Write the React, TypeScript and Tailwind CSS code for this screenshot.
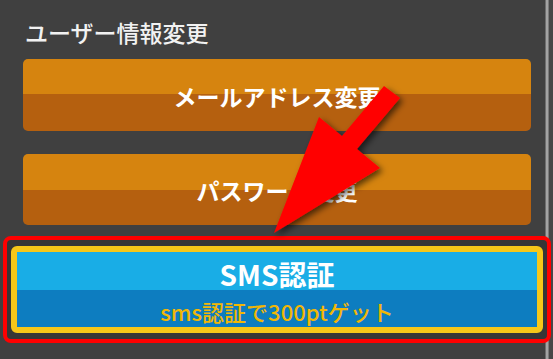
import React from "react";

export default function App() {
  return (
    <div className="relative flex h-[359px] w-[553px] overflow-hidden bg-[#404040] font-['Noto_Sans_CJK_JP','Noto_Sans',sans-serif]">
      <div className="flex w-[545px] flex-col">
        <div className="ml-[25px] mt-[17px] text-[23px] font-medium leading-[30px] text-[#f2f2f2]">
          ユーザー情報変更
        </div>
        <button className="ml-[23px] mr-[14px] mt-[12px] flex h-[72px] items-center justify-center rounded-[5px] bg-[linear-gradient(#d6840f_0_49%,#b5600f_49%)] pt-[2px] text-[23px] font-bold text-white">
          メールアドレス変更
        </button>
        <button className="ml-[23px] mr-[14px] mt-[23px] flex h-[71px] items-center justify-center rounded-[5px] bg-[linear-gradient(#d6840f_0_51%,#b5600f_51%)] pt-[2px] text-[23px] font-bold text-white">
          パスワード変更
        </button>
        <div className="relative z-10 ml-[3px] mr-[-6px] mt-[11px] rounded-[8px] border-[4px] border-[#ff0000] bg-[#363636] px-[4px] py-[6px]">
          <div className="flex h-[87px] flex-col overflow-hidden rounded-[6px] border-[6px] border-[#f6c719] bg-[#0d7dc0]">
            <div className="flex h-[38px] items-center justify-center bg-[#19ade6] pt-[6px] text-[28px] font-bold leading-none text-white">
              SMS認証
            </div>
            <div className="flex flex-1 items-center justify-center pt-[4px] text-[22px] font-medium leading-none text-[#f2b705]">
              sms認証で300ptゲット
            </div>
          </div>
        </div>
      </div>
      <div className="flex w-[8px] bg-[#474747]">
        <div className="w-[1px] bg-[#6e6e6e]" />
        <div className="w-[2px] bg-[#a3a3a3]" />
        <div className="w-[1px] bg-[#7a7a7a]" />
      </div>
      <svg
        className="pointer-events-none absolute inset-0 z-20"
        width="553"
        height="359"
        viewBox="0 0 553 359"
      >
        <defs>
          <filter id="sh" x="-20%" y="-20%" width="140%" height="140%">
            <feDropShadow dx="3" dy="3" stdDeviation="3" floodColor="#000" floodOpacity="0.6" />
          </filter>
        </defs>
        <polygon
          points="274,233 380,168 357,149 400,98 384,86 342,136 319,117"
          fill="#ff0000"
          filter="url(#sh)"
        />
      </svg>
    </div>
  );
}
